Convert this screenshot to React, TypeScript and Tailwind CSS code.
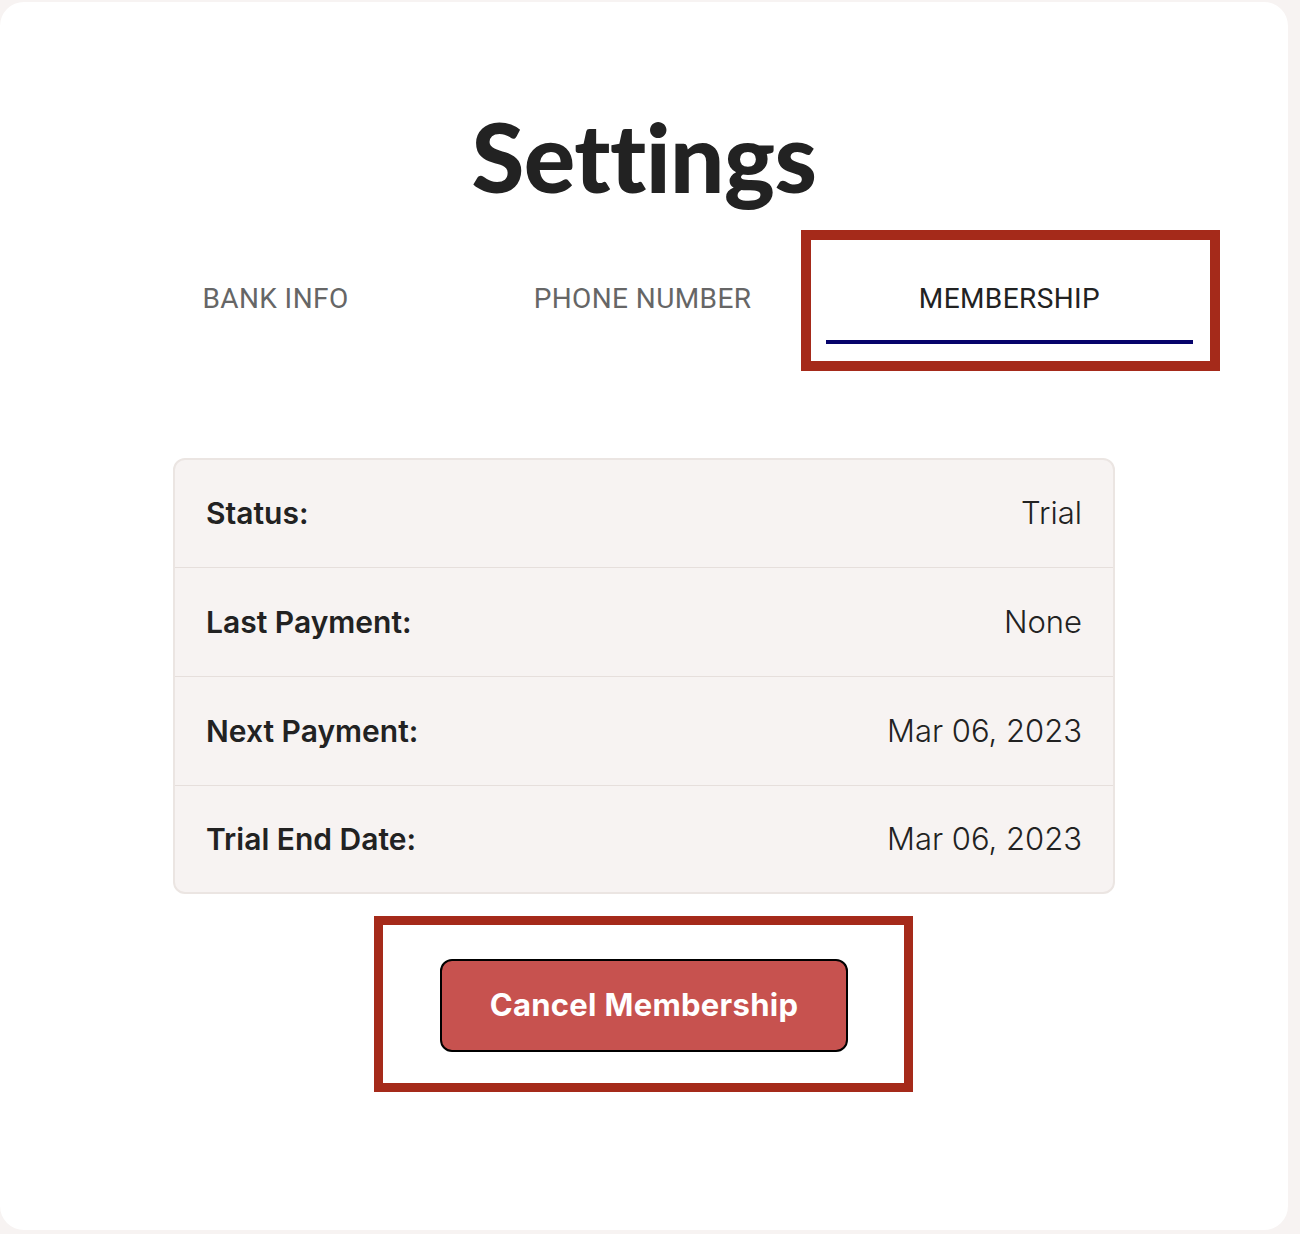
const rows = [
  { label: "Status:", value: "Trial" },
  { label: "Last Payment:", value: "None" },
  { label: "Next Payment:", value: "Mar 06, 2023" },
  { label: "Trial End Date:", value: "Mar 06, 2023" },
];

const tabs = ["BANK INFO", "PHONE NUMBER", "MEMBERSHIP"];

export default function App() {
  const active = 2;

  return (
    <div className="min-h-screen bg-[#f7f3f2] pt-[2px]">
      <div className="flex h-[1228px] w-[1288px] flex-col items-center rounded-[24px] bg-white pt-[106px]">
        <h1 className="font-['Lato',sans-serif] text-[96px] leading-none font-black tracking-[-0.5px] text-[#222222]">
          Settings
        </h1>

        {/* tabs */}
        <div className="mt-[46px] mr-[3px] flex w-[1101px]">
          {tabs.map((t, i) => (
            <div
              key={t}
              className={`relative flex h-[94px] flex-1 items-center justify-center pt-[4px] font-['Roboto',sans-serif] text-[28px] tracking-[0.4px] ${
                i === active ? "text-[#222222]" : "text-[#666666]"
              }`}
            >
              {t}
              {i === active && (
                <>
                  <span className="absolute bottom-0 left-0 h-[4px] w-full bg-[#06036b]" />
                  <span className="absolute -top-[20px] -right-[27px] -bottom-[27px] -left-[25px] border-[10px] border-[#a52a1a]" />
                </>
              )}
            </div>
          ))}
        </div>

        {/* membership details */}
        <div className="mt-[114px] w-[942px] overflow-hidden rounded-[12px] border-2 border-[#ebe5e2] bg-[#f7f3f2] font-['Inter',sans-serif] text-[#222222]">
          {rows.map((r, i) => (
            <div
              key={r.label}
              className={`flex items-center justify-between px-[31px] ${
                i === 0 ? "h-[107px]" : i === 3 ? "h-[107px] border-t border-[#e6dfdc]" : "h-[109px] border-t border-[#e6dfdc]"
              }`}
            >
              <span className="text-[30px] font-semibold">{r.label}</span>
              <span className="text-[31px] font-light">{r.value}</span>
            </div>
          ))}
        </div>

        <div className="relative mt-[65px]">
          <button className="h-[93px] w-[408px] rounded-[12px] border-2 border-black bg-[#c7524f] font-['Inter',sans-serif] text-[31px] font-bold tracking-[0.3px] text-white">
            Cancel Membership
          </button>
          <span className="pointer-events-none absolute -top-[43px] -right-[65px] -bottom-[40px] -left-[66px] border-[9px] border-[#a52a1a]" />
        </div>
      </div>
    </div>
  );
}
